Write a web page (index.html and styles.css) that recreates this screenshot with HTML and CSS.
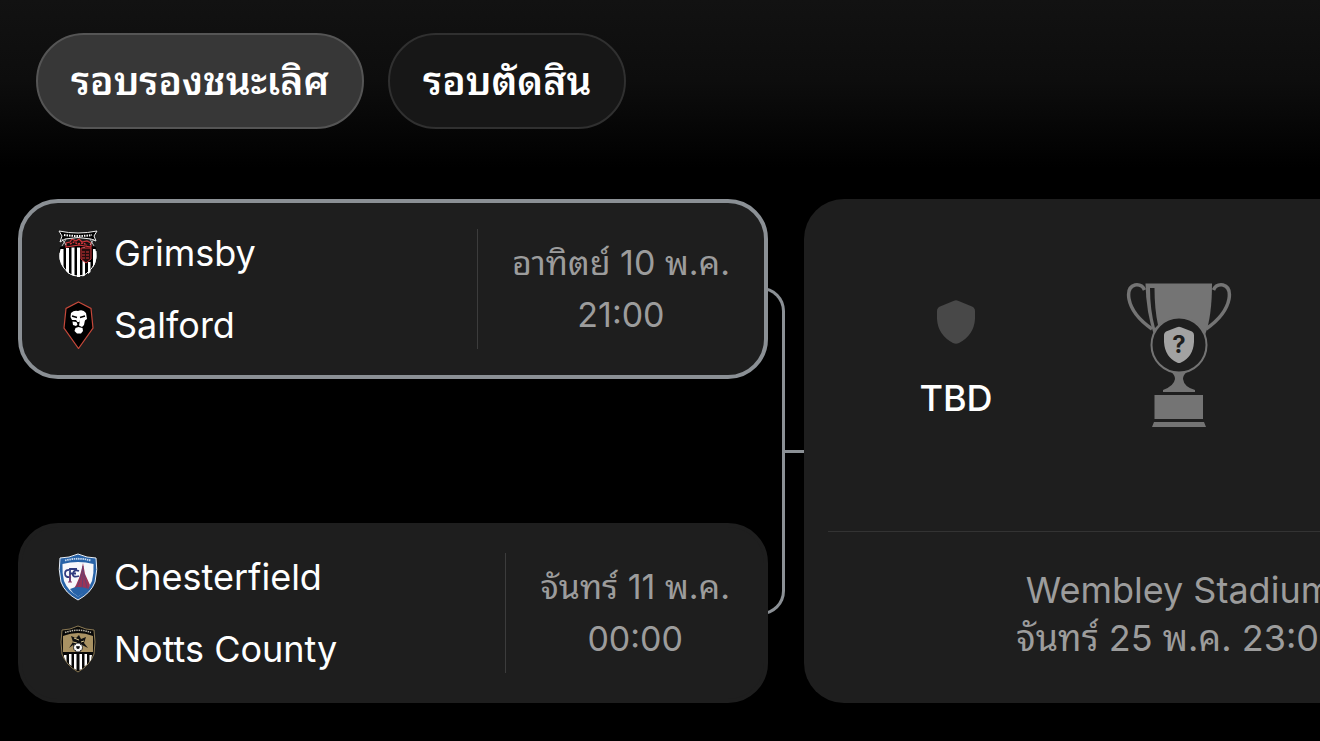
FILE: index.html
```html
<!DOCTYPE html>
<html lang="th">
<head>
  <meta charset="UTF-8" />
  <meta name="viewport" content="width=device-width, initial-scale=1.0"/>
  <title>รอบรองชนะเลิศ</title>
  <link rel="stylesheet" href="styles.css">
</head>
<body>

  <nav class="rounds">
    <button type="button" class="round active">รอบรองชนะเลิศ</button>
    <button type="button" class="round">รอบตัดสิน</button>
  </nav>

  <main class="bracket">
    <section class="semis">
      <article class="match selected">
        <div class="teams">
          <div class="team">
            <!-- Grimsby -->
            <svg class="badge" viewBox="0 0 40 48" aria-hidden="true">
              <path d="M2 18Q20 13 38 18Q42 37 28 45Q20 49 12 45Q-2 37 2 18Z" fill="#000"/>
              <path d="M2.500 20h3v19l-2-4Q0 29 2.500 20zM8 19h3v26l-3-3zM13.500 18.500h3V47l-3-1zM19 18.500h3V48h-3zM24.500 18.500H27V46.500l-2.500 1zM30 33h2.500v10L30 45zM35 20h2.500Q40 31 35 38.500z" fill="#fff"/>
              <path d="M2 24Q0 36 12 45Q20 49 28 45Q40 36 38 22" fill="none" stroke="#fff" stroke-width="1"/>
              <path d="M8 18v-4l4-1 2-3 4 2 3-2 3 3 5-1 4 2v4l-12-2z" fill="#171010" stroke="#cf3439" stroke-width="1.200"/>
              <path d="M12 15l4-2 4 2 5-1 4 2" fill="none" stroke="#cf3439" stroke-width="1.500" stroke-dasharray="2 1"/>
              <path d="M23 19h10v11l-5 4-5-4z" fill="#260c0d" stroke="#cf3439"/>
              <path d="M24 23h8M24 26h8M24 29h8" stroke="#cf3439" stroke-dasharray="3 1"/>
              <path d="M1 2Q20 6 39 2L36 7l2 5-5-2Q20 7 7 10l-5 3 2-6z" fill="#000" stroke="#eee" stroke-width="1"/>
              <path d="M6 6Q20 8 34 6" fill="none" stroke="#fff" stroke-width="2" stroke-dasharray="1.500 1"/>
              <path d="M4 10l4 6M8 10l-4 7M36 10l-4 6M32 10l4 7" stroke="#ddd" stroke-width=".8"/>
            </svg>
            <span>Grimsby</span>
          </div>
          <div class="team">
            <!-- Salford -->
            <svg class="badge" viewBox="0 0 40 48" aria-hidden="true">
              <path d="M20.500 1L33 7.500L35 27L20.500 47.500L6 27L8 7.500Z" fill="#000" stroke="#c5483a" stroke-width="1.200"/>
              <path d="M13 12Q16 9 20 10Q25 8 28 12L29 18L26 20L22 19L21.500 21H19.500L18 19L14 19L12.500 16Z" fill="#fff"/>
              <path d="M14 15l5 1.500M27 15l-5 1.500" stroke="#000" stroke-width="1.500"/>
              <path d="M14.500 20.500l4 .5 1 2.500-1.500 1.500-3-1zM22 19h5l-1 5-2 2-3-1.500z" fill="#fff"/>
              <path d="M17.500 27l3-1 4 1 .5 3-2 2.500h-4l-2.500-2.500z" fill="#fff"/>
            </svg>
            <span>Salford</span>
          </div>
        </div>
        <div class="kickoff">
          <span>อาทิตย์ 10 พ.ค.</span>
          <time>21:00</time>
        </div>
      </article>

      <article class="match">
        <div class="teams">
          <div class="team">
            <!-- Chesterfield -->
            <svg class="badge" viewBox="0 0 40 48" aria-hidden="true">
              <path d="M2 5Q11 5 20 1Q29 5 38 5Q40 16 37 29Q33 40 20 47Q7 40 3 29Q0 16 2 5Z" fill="#2863a8" stroke="#e9eef5" stroke-width="1"/>
              <path d="M4.500 11Q20 7 35.500 11Q36 20 34 28Q30 38 20 43.500Q10 38 6 28Q4 20 4.500 11Z" fill="#f7f8fc"/>
              <path d="M7 7.500Q20 4 33 7.500" fill="none" stroke="#c9daee" stroke-width="1.800" stroke-dasharray="1.500 .7"/>
              <path d="M25 10L27 21L32 32L30 37H15Q22 27 25 10Z" fill="#9b3457"/>
              <path d="M25 13Q23 27 18 36M25.500 17L24 36M26 21L29 35" fill="none" stroke="#654073" stroke-width="1"/>
              <path d="M12 36Q20 32 31 36Q27 40 20 43.500Q15 41 12 36Z" fill="#2863a8"/>
              <path d="M19 16h-7v13M12 20.500h6M13 17Q7 16 7 20.500T13 24M21 18Q16 16 15 20.500T21 23" fill="none" stroke="#303b80" stroke-width="1.800"/>
              <path d="M10 29h4M12 22v7" stroke="#963b68" stroke-width="1"/>
            </svg>
            <span>Chesterfield</span>
          </div>
          <div class="team">
            <!-- Notts County -->
            <svg class="badge" viewBox="0 0 40 48" aria-hidden="true">
              <path d="M4 5Q12 5 20 1Q28 5 36 5Q38 17 36 29Q32 40 20 47Q8 40 4 29Q2 17 4 5Z" fill="#080808" stroke="#8c7a54" stroke-width="1"/>
              <path d="M5 11Q20 5 35 11L35 27H5Z" fill="#a99263"/>
              <path d="M7 7.500Q20 3 33 7.500" fill="none" stroke="#b9b3a3" stroke-width="1.500" stroke-dasharray="1.500 .8"/>
              <path d="M6 30h2.500v7L6 32zM11 29h2.500v12L11 39zM16 29h2.500v16L16 43.500zM21.500 29H24v15l-2.500 1zM26.500 29H29v10.500l-2.500 2zM31.500 30H34l-1 5-1.500 2z" fill="#fff"/>
              <path d="M11 23l4-6-2-6 5 2 3-3 2 4 5-2-2 6 4 5-6-3-2 3h-5l-2-3z" fill="#111"/>
              <path d="M16 13l5 2M15 17l4 1M23 17l3-1" stroke="#d7c58f" stroke-width="1"/>
              <circle cx="20" cy="22.500" r="4.500" fill="#f8f8f8" stroke="#111" stroke-width=".8"/>
              <path d="M18.500 21.500h3l-.5 2h-2zM17 19l1 1M23 19l-1 1M17 26l1-1M23 26l-1-1" fill="#111" stroke="#111" stroke-width=".7"/>
            </svg>
            <span>Notts County</span>
          </div>
        </div>
        <div class="kickoff">
          <span>จันทร์ 11 พ.ค.</span>
          <time>00:00</time>
        </div>
      </article>
    </section>

    <div class="connector">
      <div class="connector-arm"></div>
      <div class="connector-stub"></div>
    </div>

    <article class="final">
      <div class="final-teams">
        <div class="finalist">
          <svg class="shield" viewBox="0 0 38 44" aria-hidden="true">
            <path d="M17 .7Q19-.3 21 .7L35 6.500Q38 8 38 11V19Q37 35 22 43Q19 44.600 16 43Q1 35 0 19V11Q0 8 3 6.500Z" fill="#484848"/>
          </svg>
          <span>TBD</span>
        </div>
        <svg class="trophy" viewBox="0 0 106 146" aria-hidden="true">
          <g fill="none" stroke="#747474" stroke-width="3.500">
            <path d="M18.500 8Q16 2 9 3Q1 5 3 17Q6 33 26 47"/>
            <path d="M87.500 8Q90 2 97 3Q105 5 103 17Q100 33 80 47"/>
          </g>
          <path d="M19.500 1.500H86Q86 35 79 53H28Q20 30 19.500 1.500Z" fill="#747474"/>
          <path d="M24 6H28.500Q28.500 27 32 43L29 46Q24 28 24 6Z" fill="#1e1e1e"/>
          <circle cx="53" cy="63" r="27.500" fill="#1e1e1e" stroke="#747474" stroke-width="2"/>
          <path d="M45 90H61Q57 93 57 97Q58 105 69 108V110H37V108Q48 104 49 97Q49 93 45 90Z" fill="#747474"/>
          <path d="M28.500 113H77V137H28.500ZM28 140H78L80 145H26Z" fill="#747474"/>
          <path d="M51 45.200Q53 44.200 55 45.200L66 49.500Q68 50.500 68 53V60Q67 75 55 80.500Q53 81.500 51 80.500Q39 75 38 60V53Q38 50.500 40 49.500Z" fill="#a2a2a2"/>
          <text class="trophy-mark" x="53" y="71" text-anchor="middle">?</text>
        </svg>
      </div>
      <div class="venue">
        <span>Wembley Stadium</span>
        <time>จันทร์ 25 พ.ค. 23:00</time>
      </div>
    </article>
  </main>

</body>
</html>
```
FILE: styles.css
```css
* {
  box-sizing: border-box;
}

body {
  margin: 0;
  min-height: 100vh;
  background: #000 linear-gradient(#121212, #0d0d0d 80px, #000 168px) no-repeat;
  font-family: Inter, "Noto Sans Thai Looped", Loma, Garuda, Waree, "Noto Sans", sans-serif;
  font-size: 36px;
  color: #fff;
  overflow-x: hidden;
}

.rounds {
  display: flex;
  gap: 24px;
  padding: 33px 36px 70px;
}

.round {
  height: 96px;
  padding: 0 33px 7px;
  border: 2px solid #303030;
  border-radius: 48px;
  background-color: #171717;
  color: #fff;
  font-family: inherit;
  font-size: 39px;
  font-weight: 600;
  white-space: nowrap;
  cursor: pointer;
}

.round.active {
  background-color: #373737;
  border-color: #555;
}

.bracket {
  display: flex;
  padding: 0 0 38px 18px;
}

.semis {
  flex: 0 0 calc(60vw - 42px);
  display: flex;
  flex-direction: column;
  gap: 144px;
  position: relative;
  z-index: 1;
}

.match {
  display: flex;
  height: 180px;
  padding: 14px 34px 14px 36px;
  border: 4px solid #1e1e1e;
  border-radius: 40px;
  background-color: #1e1e1e;
}

.match.selected {
  border-color: #8b9095;
}

.teams {
  flex: 1;
}

.team {
  display: flex;
  align-items: center;
  gap: 16px;
  height: 72px;
}

.badge {
  width: 40px;
  height: 48px;
}

.kickoff {
  display: flex;
  flex-direction: column;
  justify-content: center;
  margin: 12px 0;
  padding-left: 34px;
  border-left: 1px solid #3c3c3c;
  color: #9c9c9c;
  font-size: 34px;
  line-height: 52px;
  text-align: center;
  white-space: nowrap;
}

.connector {
  flex: 0 0 36px;
  display: flex;
  align-items: center;
}

.connector-arm {
  align-self: stretch;
  width: 25px;
  margin: 88px 0 88px -8px;
  border: 3px solid #8b9095;
  border-left: none;
  border-radius: 0 24px 24px 0;
}

.connector-stub {
  flex: 1;
  height: 3px;
  background-color: #8b9095;
}

.final {
  flex: 0 0 calc(60vw - 42px);
  display: flex;
  flex-direction: column;
  border-radius: 40px;
  background-color: #1e1e1e;
}

.final-teams {
  flex: 1;
  display: grid;
  grid-template-columns: 1fr auto 1fr;
  column-gap: 18px;
  align-items: center;
  padding-bottom: 20px;
}

.finalist {
  display: flex;
  flex-direction: column;
  align-items: center;
  gap: 32px;
  padding-top: 10px;
  font-weight: 500;
}

.shield {
  width: 38px;
  height: 44px;
}

.trophy {
  width: 106px;
  height: 146px;
}

.trophy-mark {
  fill: #1e1e1e;
  font-size: 24px;
  font-weight: 700;
}

.venue {
  display: flex;
  flex-direction: column;
  margin: 0 24px;
  padding: 34px 0 41px;
  border-top: 1px solid #333;
  color: #9c9c9c;
  line-height: 48px;
  text-align: center;
  white-space: nowrap;
}
```
